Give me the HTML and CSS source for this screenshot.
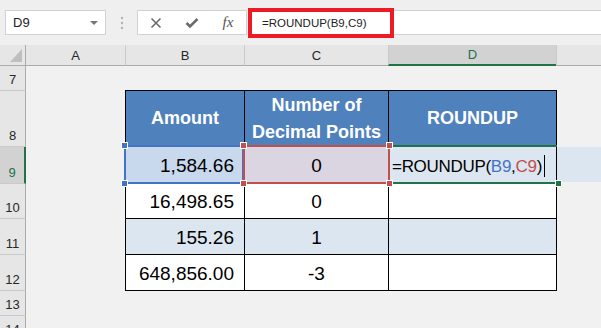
FILE: index.html
```html
<!DOCTYPE html>
<html lang="en">

<head>
    <meta charset="UTF-8">
    <title>ROUNDUP</title>
    <link rel="stylesheet" href="styles.css">
</head>

<body>

    <div class="toolbar">
        <div class="namebox"><span>D9</span><i class="drop"></i></div>
        <svg class="grip" width="8" height="14" viewBox="0 0 8 14">
            <circle cx="4" cy="2" r="1.2" fill="#b4b4b4" />
            <circle cx="4" cy="7" r="1.2" fill="#b4b4b4" />
            <circle cx="4" cy="12" r="1.2" fill="#b4b4b4" />
        </svg>
        <div class="fxbtns">
            <span class="btn">
                <svg width="12" height="12" viewBox="0 0 12 12">
                    <path d="M1.5 1.5 L10.5 10.5 M10.5 1.5 L1.5 10.5" stroke="#6b6b6b" stroke-width="1.6" fill="none" />
                </svg>
            </span>
            <span class="btn">
                <svg width="14" height="12" viewBox="0 0 14 12">
                    <path d="M1.5 6 L5 9.5 L12.5 2" stroke="#6b6b6b" stroke-width="2.6" fill="none" />
                </svg>
            </span>
            <span class="btn fx">fx</span>
        </div>
        <div class="formula">
            <span class="hl">=ROUNDUP(B9,C9)</span>
        </div>
    </div>

    <div class="colheads">
        <div class="corner"><i></i></div>
        <div class="ch col-a">A</div>
        <div class="ch col-b">B</div>
        <div class="ch col-c">C</div>
        <div class="ch col-d on">D</div>
        <div class="ch col-e"></div>
    </div>

    <div class="sheet">
        <div class="rowheads">
            <div class="rh h25">7</div>
            <div class="rh h56">8</div>
            <div class="rh h37 on">9</div>
            <div class="rh h35">10</div>
            <div class="rh h36">11</div>
            <div class="rh h36">12</div>
            <div class="rh h25">13</div>
            <div class="rh h25">14</div>
        </div>

        <div class="cells">
            <div class="tr head">
                <div class="td b">Amount</div>
                <div class="td c">Number of<br>Decimal Points</div>
                <div class="td d">ROUNDUP</div>
            </div>
            <div class="tr r9 alt">
                <div class="td b num sel-b">1,584.66
                    <span class="frame blue"><i class="hd tl"></i><i class="hd bl"></i></span>
                </div>
                <div class="td c mid sel-c">0
                    <span class="frame red"><i class="hd tl"></i><i class="hd bl"></i><i class="hd tr"></i><i class="hd br"></i></span>
                </div>
                <div class="td d edit">
                    <span>=ROUNDUP(<span class="ref-b">B9</span>,<span class="ref-c">C9</span>)<i class="cursor"></i></span>
                    <span class="frame green"><i class="hd br"></i></span>
                </div>
                <div class="spill"></div>
            </div>
            <div class="tr r10">
                <div class="td b num">16,498.65</div>
                <div class="td c mid">0</div>
                <div class="td d"></div>
            </div>
            <div class="tr r11 alt">
                <div class="td b num">155.26</div>
                <div class="td c mid">1</div>
                <div class="td d"></div>
            </div>
            <div class="tr r12 last">
                <div class="td b num">648,856.00</div>
                <div class="td c mid">-3</div>
                <div class="td d"></div>
            </div>
        </div>
    </div>

</body>

</html>
```

FILE: styles.css
```css
body {
    margin: 0;
    width: 601px;
    height: 328px;
    overflow: hidden;
    background-color: #f1f1f1;
    font-family: "Liberation Sans", Arial, sans-serif;
    color: #000;
}

/* formula bar */

.toolbar {
    height: 45px;
    display: flex;
    align-items: center;
    padding-left: 5px;
    box-sizing: border-box;
    background-color: #efefef;
}

.namebox {
    width: 101px;
    height: 25px;
    box-sizing: border-box;
    display: flex;
    align-items: center;
    justify-content: space-between;
    padding: 0 7px 0 7px;
    background-color: #fff;
    border: 1px solid #d2d2d2;
    font-size: 13px;
    color: #222;
}

.drop {
    border-left: 4px solid transparent;
    border-right: 4px solid transparent;
    border-top: 4px solid #777;
}

.grip {
    margin-left: 12px;
}

.fxbtns {
    width: 110px;
    height: 25px;
    margin-left: 11px;
    box-sizing: border-box;
    display: flex;
    align-items: center;
    background-color: #fff;
    border: 1px solid #d2d2d2;
}

.btn {
    width: 36px;
    display: flex;
    justify-content: center;
    align-items: center;
}

.fx {
    font-family: "Liberation Serif", serif;
    font-style: italic;
    font-size: 15px;
    color: #555;
}

.formula {
    flex: 1;
    height: 25px;
    margin-left: 1px;
    box-sizing: border-box;
    display: flex;
    align-items: center;
    background-color: #fff;
    border: 1px solid #d2d2d2;
    border-right: none;
}

.hl {
    width: 146px;
    height: 30px;
    margin-left: -1px;
    box-sizing: border-box;
    display: flex;
    align-items: center;
    padding-left: 10px;
    border: 4px solid #ed1c24;
    font-size: 11.5px;
    color: #222;
}

/* column headers */

.colheads {
    display: flex;
    height: 21px;
    background-color: #e6e6e6;
    font-size: 13px;
    color: #262626;
}

.corner,
.ch {
    height: 21px;
    box-sizing: border-box;
    border-bottom: 1px solid #ababab;
    display: flex;
    align-items: center;
    justify-content: center;
}

.corner {
    width: 26px;
    border-right: 1px solid #ababab;
    position: relative;
}

.corner i {
    position: absolute;
    right: 3px;
    bottom: 3px;
    border-left: 12px solid transparent;
    border-bottom: 13px solid #bfbfbf;
}

.col-a { width: 99px; }
.col-b { width: 119px; border-left: 1px solid #cacaca; }
.col-c { width: 144px; border-left: 1px solid #cacaca; }
.col-d { width: 168px; border-left: 1px solid #cacaca; }
.col-e { flex: 1; border-left: 1px solid #cacaca; }

.ch.on {
    background-color: #d2d2d2;
    border-bottom: 2px solid #217346;
    color: #217346;
}

/* grid */

.sheet {
    display: flex;
}

.rowheads {
    width: 26px;
    display: flex;
    flex-direction: column;
    background-color: #e6e6e6;
    font-size: 13px;
    color: #262626;
}

.rh {
    box-sizing: border-box;
    display: flex;
    align-items: flex-end;
    justify-content: center;
    padding-bottom: 3px;
    border-right: 1px solid #ababab;
    border-bottom: 1px solid #cacaca;
}

.rh.on {
    background-color: #d2d2d2;
    border-right: 2px solid #217346;
    color: #217346;
}

.h25 { height: 25px; }
.h35 { height: 35px; }
.h36 { height: 36px; }
.h37 { height: 37px; }
.h56 { height: 56px; }

.cells {
    flex: 1;
    padding: 24px 0 0 99px;
}

.tr {
    display: flex;
}

.td {
    position: relative;
    box-sizing: border-box;
    display: flex;
    align-items: center;
    border-left: 1px solid #000;
    border-top: 1px solid #000;
    background-color: #fff;
    font-size: 19px;
    padding-top: 2px;
}

.td.b { width: 119px; }
.td.c { width: 144px; }
.td.d { width: 169px; border-right: 1px solid #000; }

.head .td {
    height: 56px;
    justify-content: center;
    text-align: center;
    background-color: #4f81bd;
    color: #fff;
    font-weight: bold;
    font-size: 18px;
    line-height: 27px;
    padding-top: 0;
}

.r9 .td { height: 37px; }
.r10 .td { height: 35px; }
.r11 .td { height: 36px; }
.r12 .td { height: 37px; border-bottom: 1px solid #000; }

.alt .td { background-color: #dce6f1; }

.num {
    justify-content: flex-end;
    padding-right: 10px;
}

.mid {
    justify-content: center;
}

/* editing row */

.r9 .sel-b { background-color: #c8d9ee; }
.r9 .sel-c { background-color: #dbd5e1; }

.edit {
    padding-left: 3px;
    font-size: 17px;
    letter-spacing: -0.3px;
}

.ref-b { color: #4472c4; }
.ref-c { color: #c0504d; }

.cursor {
    display: inline-block;
    width: 1px;
    height: 22px;
    margin-left: 2px;
    vertical-align: -5px;
    background-color: #000;
}

.spill {
    flex: 1;
    height: 35px;
    margin-top: 1px;
    background-color: #dce6f1;
}

.frame {
    position: absolute;
    left: -2px;
    top: -2px;
    right: -1px;
    bottom: -1px;
    z-index: 1;
}

.frame.blue { border: 2px solid #4472c4; right: 0; }
.frame.red { border: 2px solid #c0504d; left: -2px; right: -2px; z-index: 2; }
.frame.green {
    left: -1px;
    right: -1px;
    border-top: 2px solid #217346;
    border-bottom: 2px solid #217346;
    border-left: 1px solid #1e4d33;
}

.hd {
    position: absolute;
    width: 7px;
    height: 7px;
    box-sizing: border-box;
    border: 1px solid #fff;
}

.blue .hd { background-color: #4472c4; }
.red .hd { background-color: #c0504d; }
.green .hd { background-color: #217346; }

.hd.tl { left: -5px; top: -5px; }
.hd.bl { left: -5px; bottom: -5px; }
.hd.tr { right: -5px; top: -5px; }
.hd.br { right: -5px; bottom: -5px; }
```
